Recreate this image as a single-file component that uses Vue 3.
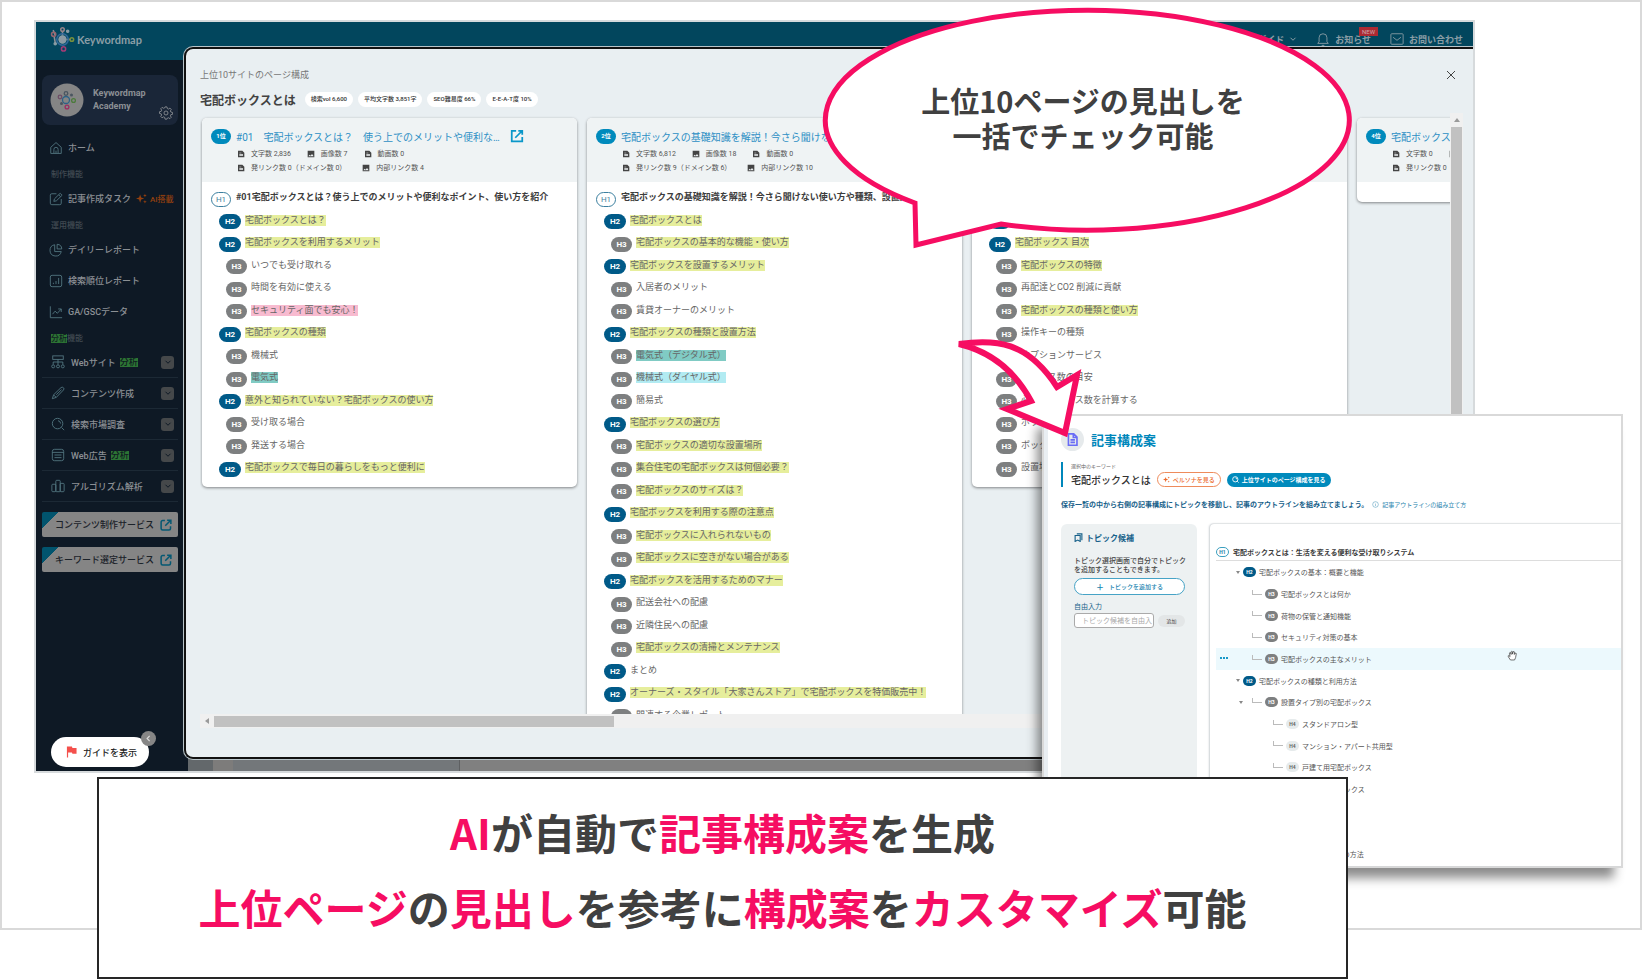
<script setup>
const daily = [
  { label: 'デイリーレポート', icon: 'pie' },
  { label: '検索順位レポート', icon: 'rank' },
  { label: 'GA/GSCデータ', icon: 'trend' },
]
const analysis = [
  { label: 'Webサイト', icon: 'sitemap', mark: true },
  { label: 'コンテンツ作成', icon: 'pen' },
  { label: '検索市場調査', icon: 'search' },
  { label: 'Web広告', icon: 'list', mark: true },
  { label: 'アルゴリズム解析', icon: 'bars' },
]
const services = ['コンテンツ制作サービス', 'キーワード選定サービス']
const chips = ['検索vol 6,600', '平均文字数 3,851字', 'SEO難易度 66%', 'E-E-A-T度 10%']

const y = 'lime', p = 'pink', t = 'teal', c = 'cyan'
const pages = [
  {
    rank: '1位',
    title: '#01　宅配ボックスとは？　使う上でのメリットや便利な…',
    open: true,
    meta: [['文字数 2,836', '画像数 7', '動画数 0'], ['発リンク数 0（ドメイン数 0）', '内部リンク数 4']],
    rows: [
      [1, '#01宅配ボックスとは？使う上でのメリットや便利なポイント、使い方を紹介'],
      [2, '宅配ボックスとは？', y],
      [2, '宅配ボックスを利用するメリット', y],
      [3, 'いつでも受け取れる'],
      [3, '時間を有効に使える'],
      [3, 'セキュリティ面でも安心！', p],
      [2, '宅配ボックスの種類', y],
      [3, '機械式'],
      [3, '電気式', t],
      [2, '意外と知られていない？宅配ボックスの使い方', y],
      [3, '受け取る場合'],
      [3, '発送する場合'],
      [2, '宅配ボックスで毎日の暮らしをもっと便利に', y],
    ],
  },
  {
    rank: '2位',
    title: '宅配ボックスの基礎知識を解説！今さら聞けない…',
    meta: [['文字数 6,812', '画像数 18', '動画数 0'], ['発リンク数 9（ドメイン数 6）', '内部リンク数 10']],
    rows: [
      [1, '宅配ボックスの基礎知識を解説！今さら聞けない使い方や種類、設置方法'],
      [2, '宅配ボックスとは', y],
      [3, '宅配ボックスの基本的な機能・使い方', y],
      [2, '宅配ボックスを設置するメリット', y],
      [3, '入居者のメリット'],
      [3, '賃貸オーナーのメリット'],
      [2, '宅配ボックスの種類と設置方法', y],
      [3, '電気式（デジタル式）', t],
      [3, '機械式（ダイヤル式）', c],
      [3, '簡易式'],
      [2, '宅配ボックスの選び方', y],
      [3, '宅配ボックスの適切な設置場所', y],
      [3, '集合住宅の宅配ボックスは何個必要？', y],
      [3, '宅配ボックスのサイズは？', y],
      [2, '宅配ボックスを利用する際の注意点', y],
      [3, '宅配ボックスに入れられないもの', y],
      [3, '宅配ボックスに空きがない場合がある', y],
      [2, '宅配ボックスを活用するためのマナー', y],
      [3, '配送会社への配慮'],
      [3, '近隣住民への配慮'],
      [3, '宅配ボックスの清掃とメンテナンス', y],
      [2, 'まとめ'],
      [2, 'オーナーズ・スタイル「大家さんストア」で宅配ボックスを特価販売中！', y],
      [3, '関連する企業レポート'],
    ],
  },
  {
    rank: '',
    title: '',
    meta: [],
    rows: [
      [1, ''],
      [2, ''],
      [2, '宅配ボックス 目次', y],
      [3, '宅配ボックスの特徴', y],
      [3, '再配達とCO2 削減に貢献'],
      [3, '宅配ボックスの種類と使い方', y],
      [3, '操作キーの種類'],
      [3, 'オプションサービス'],
      [3, 'ボックス数の目安'],
      [3, '必要なボックス数を計算する'],
      [3, 'ボックス'],
      [3, 'ボックス'],
      [3, '設置場所'],
    ],
  },
  {
    rank: '4位',
    title: '宅配ボックスとは',
    meta: [['文字数 0', '画像数 0'], ['発リンク数 0（ドメイン数 0）']],
    rows: [],
  },
]
const tree = [
  { level: 2, text: '宅配ボックスの基本：概要と機能', caret: true },
  { level: 3, text: '宅配ボックスとは何か' },
  { level: 3, text: '荷物の保管と通知機能' },
  { level: 3, text: 'セキュリティ対策の基本' },
  { level: 3, text: '宅配ボックスの主なメリット', active: true },
  { level: 2, text: '宅配ボックスの種類と利用方法', caret: true },
  { level: 3, text: '設置タイプ別の宅配ボックス', caret: true },
  { level: 4, text: 'スタンドアロン型' },
  { level: 4, text: 'マンション・アパート共用型' },
  { level: 4, text: '戸建て用宅配ボックス' },
  { level: 4, text: '屋外用宅配ボックス' },
  { level: 3, text: '機能別' },
  { level: 4, text: '電気式' },
  { level: 2, text: '宅配ボックスの設置と管理の方法', caret: true },
]
</script>

<template>
  <div class="page">
    <svg class="defs" aria-hidden="true">
      <defs>
        <symbol id="home" viewBox="0 0 16 16"><path d="M2 7.2 8 1.8l6 5.4V14.2H2z M5.6 14V9.6a2.4 2.4 0 0 1 4.8 0V14 M8 14V11" /></symbol>
        <symbol id="edit" viewBox="0 0 16 16"><path d="M8.5 2H3.2A1.7 1.7 0 0 0 1.500 3.700V12.800A1.700 1.700 0 0 0 3.200 14.500H12.300A1.700 1.700 0 0 0 14 12.800V8 M5.500 10.700 6.200 7.900 12.700 1.500 15 3.700 8.400 10.100z M11 3.200 13.200 5.400" /></symbol>
        <symbol id="pie" viewBox="0 0 16 16"><path d="M6.500 2A6.500 6.500 0 1 0 14 9.800H6.500z M9.300 1.500A5.600 5.600 0 0 1 14.600 6.800H9.300z" /></symbol>
        <symbol id="rank" viewBox="0 0 16 16"><rect x="1.500" y="1.500" width="13" height="13" rx="2" /><path d="M5 11.500V10 M8 11.500V8 M11 11.500V4.500" /></symbol>
        <symbol id="trend" viewBox="0 0 16 16"><path d="M1.500 1.500V14.500H15 M4 10.500 7 7 9.500 9.500 14 4.500 M10.500 4.500H14V8" /></symbol>
        <symbol id="sitemap" viewBox="0 0 16 16"><rect x="2" y="1" width="12" height="4" /><path d="M8 5V11 M2.500 11V8H13.500V11" /><circle cx="2.500" cy="13" r="1.700" /><circle cx="8" cy="13" r="1.700" /><circle cx="13.500" cy="13" r="1.700" /></symbol>
        <symbol id="pen" viewBox="0 0 16 16"><path d="M1.500 14.500 3 10 11.500 1.800Q13 .8 14.200 2T14.300 4.500L6 13z M3 10.200 6 13 M6 10 12 4.200" /></symbol>
        <symbol id="search" viewBox="0 0 16 16"><circle cx="7.500" cy="7.500" r="6" /><path d="M12 12 15 15 M8 4.200A3.500 3.500 0 0 1 11 7.500" /></symbol>
        <symbol id="list" viewBox="0 0 16 16"><rect x="1.500" y="1.500" width="13" height="13" rx="2.500" /><path d="M1.500 5H14.500 M4 8H12 M4 11H12" /></symbol>
        <symbol id="bars" viewBox="0 0 16 16"><rect x="1" y="6" width="4.500" height="8.500" rx="1" /><rect x="5.500" y="1.500" width="5" height="13" rx="1" /><rect x="10.500" y="5" width="4.500" height="9.500" rx="1" /></symbol>
        <symbol id="chev" viewBox="0 0 16 16"><path d="M3 5.500 8 10.500 13 5.500" /></symbol>
        <symbol id="ext" viewBox="0 0 16 16"><path d="M6.500 2H3.500A2 2 0 0 0 1.500 4V12.500A2 2 0 0 0 3.500 14.500H12A2 2 0 0 0 14 12.500V9.500 M9.500 1.500H14.500V6.500 M14.300 1.700 7 9" /></symbol>
        <symbol id="open" viewBox="0 0 16 16"><path d="M7 2H2V14H14V9 M9.500 2H14V6.500 M14 2 6 10" /></symbol>
        <symbol id="note" viewBox="0 0 12 12"><path class="solid" fill-rule="evenodd" d="M1.500 1H8L11 4V11H1.500z M3.500 4H6.500V5H3.500z M3.500 6H9V7H3.500z M3.500 8H9V9H3.500z" /></symbol>
        <symbol id="image" viewBox="0 0 12 12"><path class="solid" fill-rule="evenodd" d="M1 1H11V11H1z M2 9.500H10L7.500 6 5.500 8.500 4 7z" /></symbol>
        <symbol id="spark" viewBox="0 0 16 16"><path class="solid" d="M6 2 7.500 6.500 12 8 7.500 9.500 6 14 4.500 9.500 0 8 4.500 6.500z M13 1 13.700 3 15.700 3.700 13.700 4.400 13 6.400 12.300 4.400 10.300 3.700 12.300 3z M13 10 13.700 12 15.700 12.700 13.700 13.400 13 15.400 12.300 13.400 10.300 12.700 12.300 12z" /></symbol>
        <symbol id="gear" viewBox="0 0 16 16"><path d="M6.900 1h2.200l.4 1.900 1.300.6 1.700-1.100 1.500 1.500-1 1.700.5 1.300 2 .5v2.100l-2 .4-.5 1.300 1 1.700-1.500 1.500-1.700-1-1.300.5L9.100 15H6.900l-.4-2-1.300-.6-1.700 1.100L2 12l1-1.700-.5-1.300-1.900-.4V6.500l1.900-.4L3 4.800 2 3.100l1.500-1.500 1.700 1 1.300-.5z" /><circle cx="8" cy="8" r="2.300" /></symbol>
        <symbol id="mail" viewBox="0 0 16 16"><rect x="1" y="2" width="14" height="12" rx="1" /><path d="M3.500 6 8 9.500 12.500 6" /></symbol>
        <symbol id="bell" viewBox="0 0 16 16"><path d="M2 13H14L12.500 11V6.500A4.500 4.500 0 0 0 3.500 6.500V11z M6.500 15.300H9.500" /></symbol>
        <symbol id="doc" viewBox="0 0 16 16"><path d="M3 1H9.500L13.500 5V15H3z M9 1.500V5.500H13 M5.500 8.500H11 M5.500 11.500H11" /></symbol>
        <symbol id="topics" viewBox="0 0 16 16"><path d="M5 1.500H14V13 M2 4.500H11V15L6.500 12.500 2 15z" /></symbol>
        <symbol id="info" viewBox="0 0 16 16"><circle cx="8" cy="8" r="6.500" /><path d="M8 7V11.500 M8 4.500V5.500" /></symbol>
      </defs>
    </svg>

    <div class="frame">
      <div class="window">
        <header class="topbar">
          <a class="brand" href="#">
            <svg class="logo" viewBox="0 0 24 24" aria-hidden="true">
              <g fill="none" stroke="#8b8f95" stroke-width="1.500">
                <path d="M5 8 3 3 M12 8V4 M16 12H20 M5 15 4 9" />
                <circle cx="12" cy="12" r="5.500" stroke="#31699a" />
                <circle cx="3.500" cy="7" r="2" stroke="#95656f" />
                <circle cx="12" cy="2.500" r="1.700" stroke="#94848a" />
                <circle cx="21" cy="12" r="1.700" stroke="#78903d" />
                <circle cx="13" cy="21" r="2" stroke="#a33c75" />
              </g>
              <circle cx="12" cy="12" r="3.500" fill="#8c9aa3" />
              <circle cx="17" cy="4" r="1.200" fill="#8c9aa3" /><circle cx="5" cy="16" r="1.200" fill="#8c9aa3" />
            </svg>
            <span>Keywordmap</span>
          </a>
          <nav class="topnav">
            <a href="#" class="toplink">ガイド<svg class="i8"><use href="#chev" /></svg></a>
            <a href="#" class="toplink news"><svg class="i14"><use href="#bell" /></svg>お知らせ<em class="new">NEW</em></a>
            <a href="#" class="toplink"><svg class="i14"><use href="#mail" /></svg>お問い合わせ</a>
          </nav>
        </header>

        <div class="body">
          <aside class="side">
            <div class="profile">
              <svg class="avatar" viewBox="0 0 34 34" aria-hidden="true">
                <circle cx="17" cy="17" r="16.500" fill="#858585" stroke="none" />
                <g fill="none" stroke-width="1.300">
                  <circle cx="16" cy="17" r="3.500" stroke="#2c6287" /><circle cx="16" cy="10.500" r="1.800" stroke="#4a5560" />
                  <circle cx="10" cy="14" r="1.800" stroke="#6d4d66" /><circle cx="23.500" cy="17.500" r="1.900" stroke="#4b7b3b" />
                  <circle cx="17" cy="24" r="1.900" stroke="#9b2d61" />
                </g>
                <g fill="#4a5560" stroke="none"><circle cx="11.500" cy="20.500" r="1.500" /><circle cx="21.500" cy="12" r="1.500" /></g>
              </svg>
              <strong>Keywordmap<br />Academy</strong>
              <button class="plain" aria-label="設定"><svg class="i14"><use href="#gear" /></svg></button>
            </div>
            <nav class="menu">
              <a href="#" class="item"><svg class="i14"><use href="#home" /></svg>ホーム</a>
              <p class="group">制作機能</p>
              <a href="#" class="item"><svg class="i14"><use href="#edit" /></svg>記事作成タスク<span class="ai"><svg><use href="#spark" /></svg>AI搭載</span></a>
              <p class="group">運用機能</p>
              <a v-for="d in daily" :key="d.label" href="#" class="item"><svg class="i14"><use :href="'#' + d.icon" /></svg>{{ d.label }}</a>
              <p class="group tight"><mark>分析</mark>機能</p>
              <button v-for="a in analysis" :key="a.label" class="fold">
                <svg class="i14"><use :href="'#' + a.icon" /></svg>{{ a.label }}<mark v-if="a.mark">分析</mark>
                <span class="toggle"><svg class="i8"><use href="#chev" /></svg></span>
              </button>
            </nav>
            <div class="services">
              <a v-for="s in services" :key="s" href="#" class="service">{{ s }}<svg><use href="#ext" /></svg></a>
            </div>
          </aside>
          <div class="backdrop"></div>
        </div>

        <div class="guide">
          <button class="guide-btn">
            <svg viewBox="0 0 12 12" aria-hidden="true"><path d="M1 0H6.500L7 1.500H11.500V8H7L6.500 6.500H2.300V12H1z" fill="#f4504c" /></svg>
            ガイドを表示
          </button>
          <button class="guide-close" aria-label="閉じる"><svg viewBox="0 0 16 16"><path d="M10 3.500 5.500 8 10 12.500" /></svg></button>
        </div>

        <section class="modal">
          <div class="modal-top">
            <span>上位10サイトのページ構成</span>
            <button class="plain close" aria-label="閉じる"><svg viewBox="0 0 10 10"><path d="M1 1 9 9 M9 1 1 9" /></svg></button>
          </div>
          <div class="modal-title">
            <h1>宅配ボックスとは</h1>
            <span v-for="chip in chips" :key="chip" class="chip">{{ chip }}</span>
          </div>
          <div class="board">
            <div class="lanes">
              <article v-for="(page, i) in pages" :key="i" class="card">
                <header class="card-head">
                  <div v-if="page.title" class="card-title">
                    <span class="rank">{{ page.rank }}</span>
                    <a href="#">{{ page.title }}</a>
                    <svg v-if="page.open" class="open"><use href="#open" /></svg>
                  </div>
                  <div v-for="(line, n) in page.meta" :key="n" class="meta">
                    <span v-for="(m, k) in line" :key="m"><svg><use :href="k === 1 ? '#image' : '#note'" /></svg>{{ m }}</span>
                  </div>
                </header>
                <ul class="rows" :class="{ filled: page.rows.length }">
                  <li v-for="(r, n) in page.rows" :key="n" :class="'l' + r[0]">
                    <b class="tag">H{{ r[0] }}</b><span class="txt" :class="r[2]">{{ r[1] }}</span>
                  </li>
                </ul>
              </article>
            </div>
            <div class="vbar"><i class="up"></i><i class="thumb"></i></div>
            <div class="hbar"><i class="left"></i><i class="thumb"></i></div>
          </div>
        </section>
      </div>
    </div>

    <section class="panel">
      <div class="panel-title"><span class="round"><svg class="i14"><use href="#doc" /></svg></span><h2>記事構成案</h2></div>
      <div class="kw">
        <small>選択中のキーワード</small>
        <div class="kw-row">
          <strong>宅配ボックスとは</strong>
          <button class="pill orange"><svg><use href="#spark" /></svg>ペルソナを見る</button>
          <button class="pill blue"><svg><use href="#search" /></svg>上位サイトのページ構成を見る</button>
        </div>
      </div>
      <p class="lead">保存一覧の中から右側の記事構成にトピックを移動し、記事のアウトラインを組み立てましょう。<a href="#"><svg><use href="#info" /></svg>記事アウトラインの組み立て方</a></p>
      <div class="cols">
        <div class="topics">
          <h3><svg><use href="#topics" /></svg>トピック候補</h3>
          <p>トピック選択画面で自分でトピック<br />を追加することもできます。</p>
          <button class="add"><b>＋</b>トピックを追加する</button>
          <label for="free">自由入力</label>
          <div class="free">
            <input id="free" type="text" placeholder="トピック候補を自由入" />
            <button>追加</button>
          </div>
        </div>
        <div class="outline">
          <div class="root"><b class="mini m1">H1</b>宅配ボックスとは：生活を変える便利な受け取りシステム</div>
          <ul>
            <li v-for="(n, k) in tree" :key="k" :class="['t' + n.level, { active: n.active }]">
              <span class="lead-cell"><i v-if="n.caret" class="caret"></i><i v-if="n.active" class="dots"><i></i><i></i><i></i></i></span>
              <i v-if="n.level > 2" class="joint"></i>
              <b class="mini" :class="'m' + n.level">H{{ n.level }}</b>{{ n.text }}
            </li>
          </ul>
        </div>
      </div>
      <svg class="hand" viewBox="0 0 16 16" aria-hidden="true"><path d="M5 14.500 2 10Q1 8 2.500 8L4.500 9.500 3.500 4.500Q4 3 5.200 4L6 6.500 6 2.500Q7 1 8 2.500V6L9 2.500Q10.500 1.500 11 3L10.700 6.500 12 4.500Q13.500 4 13.500 5.500L12.500 11 11 14.500z" fill="#fff" stroke="#333" /></svg>
    </section>

    <svg class="arrow" viewBox="0 0 132 106" aria-hidden="true">
      <path d="M5 10C42 5 73 7 103 53L123 41 111 99 53 75 77 67C62 39 38 18 5 10z" fill="#fff" stroke="#f60d62" stroke-width="6" />
    </svg>

    <div class="bubble">
      <svg viewBox="0 0 530 246" aria-hidden="true">
        <path d="M97 198A262 110 0 1 1 183 219L98 240z" fill="#fff" stroke="#f60d62" stroke-width="5" />
      </svg>
      <p>上位10ページの見出しを<br />一括でチェック可能</p>
    </div>

    <div class="banner">
      <p><em>AI</em>が自動で<em>記事構成案</em>を生成</p>
      <p><em>上位ページ</em>の<em>見出し</em>を参考に<em>構成案</em>を<em>カスタマイズ</em>可能</p>
    </div>
  </div>
</template>

<style>
html, body { background: #fff; }
</style>

<style scoped>
* { box-sizing: border-box; }
.page {
  position: relative;
  min-height: 979px;
  overflow: hidden;
  font-family: Roboto, "Noto Sans CJK JP", sans-serif;
  font-size: 9px;
  color: #444;
}
.defs { position: absolute; width: 0; height: 0; }
svg { fill: none; stroke: currentColor; stroke-width: 1; flex: none; }
.solid { fill: currentColor; stroke: none; }
h1, h2, h3, p, ul { margin: 0; padding: 0; }
ul { list-style: none; }
i, em { font-style: normal; }
a { color: inherit; text-decoration: none; }
button { font: inherit; color: inherit; border: 0; padding: 0; margin: 0; background: none; white-space: nowrap; }
.i14 { width: 14px; height: 14px; }
.i8 { width: 8px; height: 8px; stroke-width: 2; }

.frame { height: 930px; border: 2px solid #d9d9d9; padding: 18px 165px 0 32px; }
.window { position: relative; display: flex; flex-direction: column; height: 753px; border: 2px solid #d6dadc; overflow: hidden; }

.topbar { display: flex; justify-content: space-between; align-items: center; height: 38px; flex: none; padding: 0 10px 4px 14px; background: #02465d; color: #8b9ea6; }
.brand { display: flex; align-items: center; gap: 2px; font: 700 11px Lato, sans-serif; }
.logo { width: 25px; height: 25px; }
.topnav { display: flex; gap: 19px; font-weight: 700; }
.toplink { position: relative; display: flex; align-items: center; gap: 5px; }
.new { position: absolute; right: -7px; top: -5px; padding: 0 3px; background: #ad2a33; color: #c9a9ac; font: 6px/9px Roboto, sans-serif; }

.body { display: flex; flex: 1; }
.side { width: 152px; padding: 15px 10px 0 6px; background: #0e1925; color: #8b8f94; font-weight: 500; }
.profile { display: flex; align-items: center; height: 50px; padding: 0 5px 0 8px; border-radius: 8px; background: #1a2638; }
.avatar { width: 34px; height: 34px; }
.profile strong { flex: 1; padding-left: 9px; font-size: 9px; line-height: 13px; }
.profile .plain { align-self: flex-end; height: 22px; }
.menu { padding-top: 9px; }
.item { display: flex; align-items: center; gap: 5px; height: 27px; padding-left: 7px; white-space: nowrap; }
.item + .item { margin-top: 4px; }
.item .i14, .fold .i14 { color: #547882; }
.ai { display: flex; align-items: center; gap: 3px; font-size: 8px; color: #94400f; }
.ai svg { width: 11px; height: 11px; }
.group { height: 24px; padding: 3px 0 0 9px; font-size: 8px; line-height: 22px; color: #414a52; }
.tight { height: 22px; }
mark { background: #2c7434; color: #101c22; }
.fold { display: flex; align-items: center; gap: 6px; width: 136px; height: 31px; padding-left: 9px; font-weight: 500; border-bottom: 1px solid #1c2935; }
.fold mark { margin-left: -2px; font-size: 9px; line-height: 9px; }
.toggle { display: grid; place-items: center; width: 13px; height: 13px; margin: 0 4px 0 auto; border-radius: 3px; background: #45484a; color: #0e1925; }
.services { display: grid; gap: 10px; padding-top: 10px; }
.service { display: flex; justify-content: space-between; align-items: center; height: 25px; padding: 0 6px 0 13px; border-radius: 2px; background: linear-gradient(135deg, #01546e 12px, #858585 12px); color: #1b2229; }
.service svg { width: 12px; height: 12px; color: #045873; stroke-width: 2; }
.backdrop { flex: 1; background: linear-gradient(90deg, #63686b 25px, #7d7c7b 25px, #7d7c7b 45px, #73777a 45px, #73777a 271px, #5e6062 271px, #5e6062 272px, #808080 272px); }

.guide { position: absolute; left: 15px; bottom: 4px; }
.guide-btn { display: flex; align-items: center; gap: 6px; height: 30px; padding: 0 12px 0 15px; border-radius: 15px; background: #fff; color: #222; font-weight: 500; }
.guide-btn svg { width: 11px; height: 12px; stroke: none; }
.guide-close { position: absolute; right: -7px; top: -6px; width: 15px; height: 15px; border-radius: 50%; background: #868686; color: #ddd; display: grid; place-items: center; }
.guide-close svg { width: 9px; height: 9px; stroke-width: 2; }

.modal {
  position: absolute; left: 148px; right: 0; top: 25px; bottom: 12px;
  display: flex; flex-direction: column;
  padding: 18px 10px 29px 14px;
  background: #e9eff2; border: 2px solid #111; border-right: 0; border-radius: 9px 0 0 9px;
  box-shadow: 0 0 0 1px #b8c4c9;
}
.modal-top { display: flex; justify-content: space-between; align-items: center; height: 15px; padding-right: 7px; color: #777; }
.close svg { display: block; width: 10px; height: 10px; color: #444; }
.modal-title { display: flex; align-items: center; gap: 5px; height: 20px; margin: 7px 0 4px; }
.modal-title h1 { font-size: 12px; font-weight: 700; color: #424242; margin-right: 4px; }
.chip { height: 15px; padding: 0 6px; border-radius: 8px; background: #fff; font-size: 6px; line-height: 14px; font-weight: 500; color: #333; }
.board { flex: 1; min-height: 0; display: grid; grid-template: minmax(0, 1fr) 14px / minmax(0, 1fr) 13px; }
.lanes { display: flex; align-items: flex-start; gap: 10px; padding: 5px 2px 0; overflow: hidden; }
.card { flex: 0 0 375px; border-radius: 5px; background: #fff; box-shadow: 0 1px 3px rgba(0, 0, 0, .45); }
.card-head { height: 64px; padding: 8px 10px 0 9px; border-radius: 5px 5px 0 0; background: #eff3f4; }
.card-title { display: flex; align-items: center; height: 20px; gap: 5px; font-size: 10px; color: #2d8fc4; white-space: nowrap; }
.rank { width: 20px; height: 15px; border-radius: 8px; background: #008abc; color: #fff; font-size: 6px; line-height: 14px; font-weight: 700; text-align: center; }
.open { width: 14px; height: 14px; margin-left: 5px; stroke-width: 2; color: #0a97c9; }
.meta { display: flex; gap: 16px; height: 14px; padding-left: 26px; font-size: 7px; line-height: 16px; color: #555; white-space: nowrap; }
.meta span { display: flex; align-items: center; gap: 6px; height: 16px; }
.meta svg { width: 8px; height: 8px; color: #444; }
.rows { min-height: 20px; }
.filled { padding: 6px 0 7px; }
.rows li { display: flex; align-items: center; height: 22px; gap: 4px; padding-left: 17px; white-space: nowrap; color: #666; }
.rows li:nth-child(even) { height: 23px; }
.rows .l3 { padding-left: 24px; }
.rows .l1 { padding-left: 9px; font-weight: 700; color: #3c3c3c; }
.tag { width: 22px; height: 15px; border-radius: 8px; color: #fff; font-size: 8px; line-height: 15px; font-weight: 700; text-align: center; }
.l1 .tag { width: 20px; margin-right: 1px; border: 1px solid #3b7f9f; line-height: 13px; font-weight: 400; color: #4884a0; }
.l2 .tag { background: #005a88; }
.l3 .tag { width: 21px; background: #7d7f80; }
.txt { margin-bottom: 3px; line-height: 11px; }
.lime { background: #e6ee9c; }
.pink { background: #f8bbd0; }
.teal { background: #80cbc4; }
.cyan { background: #b2ebf2; }
.vbar { display: flex; flex-direction: column; align-items: center; background: #f0f0f0; }
.up { height: 14px; display: flex; align-items: center; }
.up::before { content: ""; border: 3px solid transparent; border-top: 0; border-bottom: 4px solid #9a9a9a; }
.vbar .thumb { width: 11px; flex: 1; background: #c1c1c1; }
.hbar { display: flex; align-items: center; background: #f0f0f0; }
.left { width: 14px; display: flex; justify-content: center; }
.left::before { content: ""; border: 3px solid transparent; border-left: 0; border-right: 4px solid #9a9a9a; }
.hbar .thumb { width: 32%; height: 11px; background: #c1c1c1; }

.panel {
  position: absolute; top: 414px; right: 19px; width: 581px; height: 454px;
  padding: 11px 0 0 14px; overflow: visible;
  background: #fff; border: 2px solid #d9d9d9;
  box-shadow: -7px 12px 10px -2px rgba(0, 0, 0, .45);
  font-size: 7px;
}
.panel::before { content: ""; position: absolute; left: 0; top: 0; bottom: 0; width: 4px; background: #e9eef2; }
.panel-title, .kw, .lead, .topics { margin-left: 3px; }
.panel-title { display: flex; align-items: center; gap: 7px; height: 24px; }
.round { display: grid; place-items: center; width: 23px; height: 23px; border-radius: 50%; background: #e6eaec; color: #696cf6; }
.round svg { stroke-width: 2; width: 13px; height: 13px; }
.panel h2 { font-size: 13px; color: #0087bb; }
.kw { height: 25px; margin-top: 11px; padding-left: 8px; border-left: 2px solid #0087bb; }
.kw small { display: block; font-size: 5px; line-height: 9px; color: #666; }
.kw-row { display: flex; align-items: center; gap: 6px; height: 17px; }
.kw strong { font-size: 10px; font-weight: 500; color: #333; }
.pill { display: flex; align-items: center; gap: 3px; height: 15px; padding: 0 5px; border-radius: 8px; font-size: 6px; font-weight: 500; }
.pill svg { width: 7px; height: 7px; stroke-width: 2; }
.orange { border: 1px solid #ee8b5b; color: #ec6a2c; background: #fff; }
.blue { height: 14px; background: #008abc; color: #fff; font-weight: 700; }
.lead { display: flex; align-items: center; gap: 4px; height: 14px; margin-top: 10px; font-weight: 700; color: #17618a; white-space: nowrap; }
.lead a { display: flex; align-items: center; gap: 3px; font-size: 6px; font-weight: 400; color: #2783ad; }
.lead svg { width: 7px; height: 7px; }
.cols { display: flex; gap: 13px; height: 342px; margin-top: 13px; }
.topics { width: 136px; padding: 7px 12px 0 13px; border-radius: 6px; background: #edf1f2; color: #444; }
.topics h3 { display: flex; align-items: center; gap: 3px; height: 13px; font-size: 8px; color: #17618a; }
.topics h3 svg { width: 9px; height: 9px; stroke-width: 2; }
.topics p { margin-top: 13px; font-weight: 500; line-height: 9px; white-space: nowrap; }
.add { display: flex; justify-content: center; align-items: center; gap: 5px; width: 100%; height: 17px; margin-top: 3px; border: 1px solid #46a3c6; border-radius: 9px; background: #fff; color: #1884b0; font-size: 6px; font-weight: 500; }
.add b { font-size: 8px; }
.topics label { display: block; margin-top: 7px; line-height: 10px; color: #17618a; }
.free { display: flex; align-items: center; gap: 4px; margin-top: 1px; }
.free input { width: 80px; height: 15px; padding: 0 0 0 7px; border: 1px solid #aaa; border-radius: 3px; background: #fff; font: inherit; }
.free input::placeholder { color: #aaa; }
.free button { flex: 1; height: 12px; border-radius: 6px; background: #e3e6e7; font-size: 5px; }
.outline { flex: 1; min-width: 0; padding: 19px 0 0 6px; border-radius: 4px 0 0 0; box-shadow: -1px 0 2px #ccd1d4, 0 -1px 1px #e8eaeb; overflow: hidden; white-space: nowrap; color: #555; }
.root { display: flex; align-items: center; gap: 4px; height: 18px; font-weight: 700; color: #3c3c3c; border-bottom: 1px solid #ddd; }
.outline li { display: flex; align-items: center; gap: 3px; height: 22px; }
.outline li:nth-child(3n) { height: 21px; }
.lead-cell { display: flex; justify-content: flex-end; align-items: center; width: 24px; }
.t3 .lead-cell { width: 33px; padding-right: 6px; }
.t4 .lead-cell { width: 54px; }
.caret { border: 2px solid transparent; border-top: 3px solid #888; border-bottom: 0; }
.dots { display: flex; gap: 1px; margin: 0 auto 2px 4px; }
.dots i { width: 2px; height: 2px; background: #1899c9; }
.joint { width: 10px; height: 5px; margin-bottom: 4px; border: solid #bbb; border-width: 0 0 1px 1px; }
.active { background: #ecf9fd; }
.mini { width: 13px; height: 10px; border-radius: 5px; color: #fff; font-size: 5px; line-height: 10px; text-align: center; }
.m1 { border: 1px solid #3b9fbf; color: #3b8fb0; line-height: 8px; }
.m2 { background: #005a88; }
.m3 { background: #7d7f80; }
.m4 { background: #e6ebec; color: #666; }
.hand { position: absolute; right: 103px; top: 234px; width: 11px; height: 11px; }

.arrow { position: absolute; left: 954px; top: 334px; width: 132px; height: 106px; }
.bubble { position: absolute; left: 818px; top: 5px; width: 530px; }
.bubble svg { display: block; width: 100%; overflow: visible; }
.bubble p { position: absolute; left: 0; right: 0; top: 78px; font: 700 29px/35px "Noto Sans CJK JP", sans-serif; color: #404040; text-align: center; }

.banner { position: absolute; left: 97px; right: 294px; top: 777px; height: 202px; padding-top: 15px; background: #fff; border: 2px solid #262626; font: 700 42px/75px "Noto Sans CJK JP", sans-serif; color: #404040; text-align: center; white-space: nowrap; }
.banner em { color: #f60d62; }
</style>
